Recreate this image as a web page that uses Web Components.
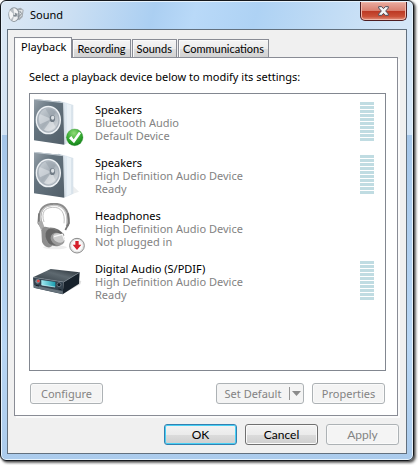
<!DOCTYPE html>
<html lang="en">
<head>
<meta charset="utf-8">
<title>Sound</title>
<style>
html { background: #fff; }
body { margin: 0; display: flex; min-height: 100vh; font: 11px/13px "Noto Sans", "Open Sans", sans-serif; color: #000; }
</style>
</head>
<body>
<sound-dialog></sound-dialog>
<script>
const define = (name, html, setup) => customElements.define(name, class extends HTMLElement {
  connectedCallback() {
    if (this.shadowRoot) return;
    const t = document.createElement('template');
    t.innerHTML = typeof html === 'function' ? html(this) : html;
    this.attachShadow({ mode: 'open' }).append(t.content.cloneNode(true));
    if (setup) setup(this, this.shadowRoot);
  }
});

const speaker = `
  <defs>
    <linearGradient id="face" x1="0" y1="0" x2="1" y2="1"><stop stop-color="#96a1aa"/><stop offset=".35" stop-color="#65747f"/><stop offset="1" stop-color="#525f69"/></linearGradient>
    <linearGradient id="side"><stop stop-color="#a5b8ca"/><stop offset=".3" stop-color="#e2ecf4"/><stop offset="1" stop-color="#d8e2ea"/></linearGradient>
    <linearGradient id="cone" x1="0" y1="0" x2="1" y2="1"><stop stop-color="#ccd3d9"/><stop offset=".5" stop-color="#a5aeb6"/><stop offset="1" stop-color="#dfe3e6"/></linearGradient>
  </defs>
  <path d="M122 160L162 146 145 130Z" fill="#eceeef"/>
  <path d="M100 32L118 37 145 45V152L123 162 112 164Z" fill="url(#side)"/>
  <path d="M126 42L138 46V152L126 158Z" fill="#eaf1f6"/>
  <path d="M27 27L118 37 123 162 27 150Z" fill="#d4dde4"/>
  <path d="M27 27L114 37 118 164 27 151Z" fill="url(#face)"/>
  <path d="M27 28L114 38" stroke="#c3ccd3" stroke-width="3"/>
  <ellipse cx="70" cy="90" rx="38" ry="43" fill="#eef2f5"/>
  <ellipse cx="70" cy="90" rx="34" ry="38" fill="#a8b1ba"/>
  <ellipse cx="70" cy="90" rx="30" ry="35" fill="url(#cone)"/>
  <path d="M80 87L44 72Q39 88 45 103Z" fill="#e6eaed" opacity=".5"/>
  <path d="M80 87L57 119Q72 130 91 111Z" fill="#f2f4f5" opacity=".5"/>
  <path d="M80 87L62 58Q76 50 92 67Z" fill="#8f99a2" opacity=".4"/>
  <ellipse cx="82" cy="86" rx="8" ry="10" fill="#717c86"/>
  <ellipse cx="83" cy="83" rx="5" ry="6" fill="#dce1e5"/>`;

const art = {
  default: speaker + `
  <defs><radialGradient id="ok" cx=".45" cy=".25" r=".8"><stop stop-color="#92dc78"/><stop offset=".55" stop-color="#35aa31"/><stop offset="1" stop-color="#0f7b17"/></radialGradient></defs>
  <circle cx="149" cy="142" r="26" fill="#fff"/><circle cx="149" cy="142" r="25" fill="url(#ok)" stroke="#27892a"/>
  <path d="M132 145L139 138 146 148 162 125 168 130 147 160Z" fill="#fff"/>`,
  speaker,
  headphones: `
  <defs><linearGradient id="cup" x1="0" x2="1" y2="1"><stop stop-color="#999"/><stop offset=".5" stop-color="#606060"/><stop offset="1" stop-color="#aaa"/></linearGradient></defs>
  <ellipse cx="90" cy="148" rx="36" ry="6" fill="#eee"/>
  <path d="M49 80C36 42 52 20 84 19C121 17 136 46 127 84" fill="none" stroke="#8c8c8c" stroke-width="9"/>
  <path d="M49 78C39 43 54 23 84 22C117 20 130 45 125 80" fill="none" stroke="#c9c9c9" stroke-width="4"/>
  <path d="M57 72C48 43 59 29 83 28C109 26 121 47 117 76" fill="none" stroke="#a2a2a2" stroke-width="2"/>
  <path d="M42 46L40 75 49 88M129 46L132 75 121 96" fill="none" stroke="#777" stroke-width="5"/>
  <path d="M38 72L51 68 58 86 48 96Z" fill="#aaa"/>
  <path d="M49 97C52 83 65 84 75 92L82 142C76 154 57 148 51 132Z" fill="#8e8e8e"/>
  <path d="M61 92C82 83 105 94 118 111L108 140C94 151 71 143 65 124Z" fill="url(#cup)"/>
  <ellipse cx="82" cy="116" rx="19" ry="25" transform="rotate(-28 82 116)" fill="#666"/>
  <ellipse cx="98" cy="123" rx="22" ry="18" transform="rotate(28 98 123)" fill="#999"/>
  <ellipse cx="101" cy="120" rx="18" ry="13" transform="rotate(28 101 120)" fill="#ccc"/>
  <path d="M87 116L112 109 119 127" fill="none" stroke="#f6f6f6" stroke-width="4"/>
  <circle cx="156" cy="143" r="22" fill="#e9e9e9" stroke="#8b8b8b" stroke-width="3"/>
  <circle cx="156" cy="143" r="18" fill="#fafafa" stroke="#ccc"/>
  <path d="M151 129H161V140H169L156 156 143 140H151Z" fill="#d5202b"/>`,
  digital: `
  <defs><linearGradient id="top" x1="0" y1="1" x2="1" y2="0"><stop stop-color="#313b43"/><stop offset=".55" stop-color="#5e6970"/><stop offset="1" stop-color="#242c33"/></linearGradient>
  <linearGradient id="lcd"><stop stop-color="#a3ebf2"/><stop offset="1" stop-color="#1a9daf"/></linearGradient></defs>
  <path d="M112 133L166 103 169 93 155 90Z" fill="#ddd"/>
  <path d="M24 82L77 57 164 67 116 96Z" fill="url(#top)"/>
  <path d="M24 82L116 96 113 133 26 113Z" fill="#34424e"/>
  <path d="M116 96L164 67 162 101 113 133Z" fill="#17212b"/>
  <path d="M24 82L116 96 164 67" fill="none" stroke="#7e8b94" stroke-width="2"/>
  <path d="M26 105L113 124V132L27 113Z" fill="#67737c"/>
  <path d="M49 90L91 96V112L49 105Z" fill="url(#lcd)"/>
  <path d="M50 105L90 111" stroke="#d5fbff" stroke-width="2"/>
  <circle cx="38" cy="94" r="7" fill="#7b8791"/><circle cx="40" cy="93" r="4" fill="#ed3f3b"/>
  <circle cx="102" cy="104" r="6" fill="#141d27" stroke="#83909a" stroke-width="2"/>
  <path d="M32 106L42 108M100 117L109 119" stroke="#17222a" stroke-width="3"/>`
};
const tops = { default: 21, speaker: 21, headphones: 15, digital: 18 };

define('device-icon', el => {
  const kind = el.getAttribute('kind');
  return `<style>:host{display:block;width:53px;height:53px}svg{display:block}</style>
  <svg width="53" height="53" viewBox="21 ${tops[kind]} 159 159" aria-hidden="true">${art[kind]}</svg>`;
});

define('level-meter', `<style>
  :host{display:grid;grid-template-rows:repeat(10,3px);row-gap:1px;width:14px}
  i{background:#c0dce2}
  </style>${'<i></i>'.repeat(10)}`);

define('device-item', el => `<style>
  :host{display:grid;grid-template-columns:53px 1fr auto;column-gap:10px;height:53px}
  .text{padding-top:6px;color:#838383;white-space:nowrap}
  .name{color:#000}
  level-meter{margin-top:5px;align-self:start}
  </style><device-icon kind="${el.getAttribute('kind')}"></device-icon>
  <div class="text"><div class="name"><slot></slot></div><div><slot name="driver"></slot></div><div><slot name="state"></slot></div></div>
  ${el.hasAttribute('meter') ? '<level-meter></level-meter>' : ''}`);

define('push-button', `<style>
  :host{display:block;width:73px;height:21px}
  button{box-sizing:border-box;width:100%;height:100%;padding:0;display:flex;align-items:center;justify-content:center;font:inherit;color:#000;white-space:nowrap;border:1px solid #707070;border-radius:3px;background:linear-gradient(#f3f3f3,#ebebeb 50%,#dcdcdc 50%,#cfcfcf);box-shadow:inset 0 0 0 1px #fafafa}
  :host([primary]) button{border-color:#3480b0;box-shadow:inset 0 0 0 1px #48d0f5}
  button:disabled{color:#838383;border-color:#adb2b5;background:#f4f4f4;box-shadow:inset 0 0 0 1px #fafafa}
  </style><button type="button"><slot></slot></button>`,
  (el, root) => { root.querySelector('button').disabled = el.hasAttribute('disabled'); });

define('split-button', `<style>
  :host{display:block;width:88px;height:21px}
  div{box-sizing:border-box;height:100%;display:grid;grid-template-columns:1fr 14px;border:1px solid #adb2b5;border-radius:3px;background:#f4f4f4}
  button{border:0;padding:0;background:none;font:inherit;color:#838383;white-space:nowrap}
  .arrow{display:flex;align-items:center;justify-content:center;border-left:1px solid #959595;margin:3px 0}
  svg{display:block}
  </style><div><button type="button" disabled><slot></slot></button><button class="arrow" type="button" aria-label="More defaults" disabled><svg width="9" height="5" viewBox="0 0 18 10"><path d="M0 0H18L9 10Z" fill="#8b8b8b"/></svg></button></div>`);

define('tab-button', `<style>
  :host{display:block;height:18px}
  button{box-sizing:border-box;width:100%;height:100%;padding:0 4px;font:11px/13px Lato,"Liberation Sans",sans-serif;color:#000;border:1px solid #898c95;border-bottom:0;background:linear-gradient(#f4f4f4,#ececec 50%,#dedede 50%,#d2d2d2);box-shadow:inset 1px 1px #fafafa;white-space:nowrap}
  :host([selected]){height:21px;margin-bottom:-1px}
  :host([selected]) button{background:#fff;padding:0 5px 3px 6px;font:inherit;position:relative}
  </style><button type="button" role="tab"><slot></slot></button>`,
  (el, root) => root.querySelector('button').setAttribute('aria-selected', el.hasAttribute('selected')));

define('title-bar', `<style>
  :host{display:flex;height:27px;line-height:16px}
  .icon{margin:5px 6px 0 1px;display:block}
  h1{font:inherit;margin:5px 0 0;flex:1}
  button{width:47px;height:19px;padding:0;display:flex;align-items:center;justify-content:center;border:1px solid #4d1d22;border-top:0;border-radius:0 0 5px 5px;background:linear-gradient(#e9ab9f,#d98070 48%,#bb3823 50%,#ca5037 80%,#e19380);box-shadow:inset 0 0 0 1px #f0b7a9;box-sizing:border-box}
  </style>
  <svg class="icon" width="16" height="16" viewBox="0 0 48 48" aria-hidden="true">
    <path d="M27 5L38 2 47 9 44 30 34 40 26 36Z" fill="#a5acb2"/><path d="M31 10L44 8 41 26 32 34Z" fill="#dfe3e6"/>
    <ellipse cx="18" cy="23" rx="17" ry="22" fill="#8c949b"/><ellipse cx="17" cy="23" rx="14" ry="19" fill="#b9bfc4"/>
    <path d="M19 23L5 10Q1 26 8 38Z" fill="#f4f5f6"/><path d="M19 23L16 4Q28 4 31 18Z" fill="#f2f3f4"/><path d="M19 23L30 32Q24 43 14 42Z" fill="#eceef0"/>
    <circle cx="21" cy="23" r="6" fill="#808990"/><circle cx="19" cy="21" r="3" fill="#e4e7e9"/><path d="M35 12L41 20M33 29L40 21" stroke="#7f888f" stroke-width="3"/>
  </svg>
  <h1><slot></slot></h1>
  <button type="button" aria-label="Close"><svg width="11" height="10" viewBox="0 0 33 30"><path d="M2 2H11L16.500 8 22 2H31V6L23 15 31 24V28H22L16.500 22 11 28H2V24L10 15 2 6Z" fill="#f5f5f5" stroke="#4d4f5c" stroke-width="3" stroke-linejoin="round"/></svg></button>`);

define('sound-dialog', `<style>
  :host{flex:1;display:flex;min-width:0;margin:0 4px 4px 0}
  .window{flex:1;min-width:0;box-sizing:border-box;display:flex;flex-direction:column;padding:1px 6px 6px;border:1px solid #15181d;border-radius:6px;
    background:linear-gradient(105deg,#dce8f4 0,#cbdff3 70px,#abcff2 150px,#b9d9f8 190px,#aed2f4 250px,#c3ddf5 330px,#d3e5f7 390px,#d3e5f7) 0 0/100% 134px no-repeat,linear-gradient(#c5dcf4,#a5c6e9 134px,#b8d6f4 75%,#abcbec);
    box-shadow:inset 0 0 0 1px #e6f2fc,1px 1px 2px #555,2px 2px 3px #888}
  .client{flex:1;display:flex;flex-direction:column;border:1px solid #62707e;background:#f0f0f0;padding:7px 7px 8px 6px}
  .tabs{display:flex;align-items:flex-end;column-gap:1px;height:20px}
  tab-button:nth-child(2){margin-left:-1px}
  .panel{flex:1;display:flex;flex-direction:column;margin-right:1px;border:1px solid #898c95;background:#fff;box-shadow:2px 2px #fbfbfb;padding:12px 11px 11px 14px}
  p{margin:0;height:23px}
  .list{flex:1;border:1px solid #828790;padding:3px 11px 3px 2px;background:#fff}
  .row{display:flex;margin:12px 1px 0;column-gap:8px}
  .row push-button:first-child{margin-right:auto}
  .footer{display:flex;justify-content:flex-end;column-gap:8px;margin-top:8px;font:12px/13px Lato,"Liberation Sans",sans-serif}
  </style>
  <div class="window" role="dialog" aria-label="Sound">
    <title-bar>Sound</title-bar>
    <div class="client">
      <div class="tabs" role="tablist"><tab-button selected>Playback</tab-button><tab-button>Recording</tab-button><tab-button>Sounds</tab-button><tab-button>Communications</tab-button></div>
      <div class="panel" role="tabpanel">
        <p>Select a playback device below to modify its settings:</p>
        <div class="list">
          <device-item kind="default" meter>Speakers<span slot="driver">Bluetooth Audio</span><span slot="state">Default Device</span></device-item>
          <device-item kind="speaker" meter>Speakers<span slot="driver">High Definition Audio Device</span><span slot="state">Ready</span></device-item>
          <device-item kind="headphones">Headphones<span slot="driver">High Definition Audio Device</span><span slot="state">Not plugged in</span></device-item>
          <device-item kind="digital" meter>Digital Audio (S/PDIF)<span slot="driver">High Definition Audio Device</span><span slot="state">Ready</span></device-item>
        </div>
        <div class="row"><push-button disabled>Configure</push-button><split-button>Set Default</split-button><push-button disabled>Properties</push-button></div>
      </div>
      <div class="footer"><push-button primary>OK</push-button><push-button>Cancel</push-button><push-button disabled>Apply</push-button></div>
    </div>
  </div>`);
</script>
</body>
</html>
